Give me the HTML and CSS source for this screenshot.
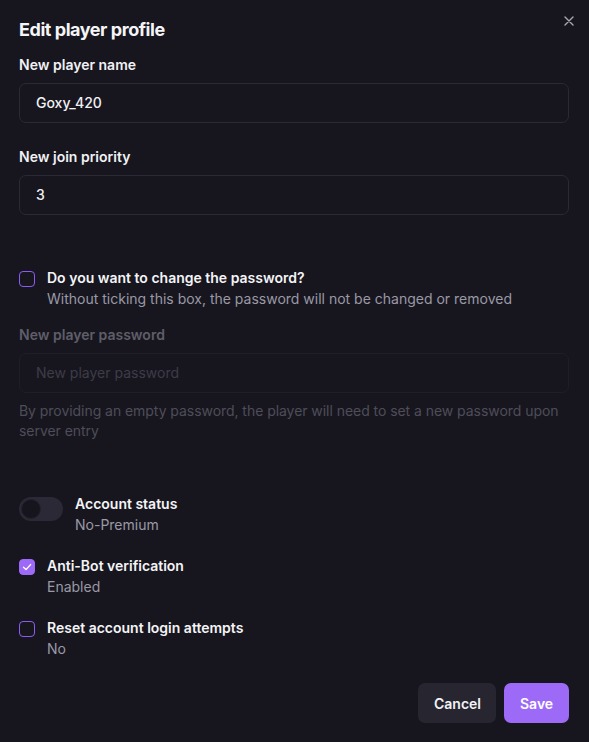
FILE: index.html
```html
<!DOCTYPE html>
<html>
<head>
<meta charset="utf-8">
<link rel="stylesheet" href="styles.css">
</head>
<body>
<div class="modal">
  <button class="close" aria-label="Close">
    <svg width="10" height="10" viewBox="0 0 10 10"><path d="M1 1L9 9M9 1L1 9" stroke="#a9a8b3" stroke-width="1.4" stroke-linecap="round"/></svg>
  </button>
  <h1 class="title">Edit player profile</h1>

  <div class="field first">
    <label class="label">New player name</label>
    <div class="input">Goxy_420</div>
  </div>

  <div class="field">
    <label class="label">New join priority</label>
    <div class="input">3</div>
  </div>

  <div class="check-row big-gap">
    <span class="box"></span>
    <div class="text">
      <div class="t-main">Do you want to change the password?</div>
      <div class="t-sub">Without ticking this box, the password will not be changed or removed</div>
    </div>
  </div>

  <div class="field pw">
    <label class="label dim">New player password</label>
    <div class="input disabled">New player password</div>
    <p class="help">By providing an empty password, the player will need to set a new password upon server entry</p>
  </div>

  <div class="check-row big-gap">
    <span class="toggle"><span class="thumb"></span></span>
    <div class="text">
      <div class="t-main">Account status</div>
      <div class="t-sub">No-Premium</div>
    </div>
  </div>

  <div class="check-row small-gap">
    <span class="box checked">
      <svg width="12" height="12" viewBox="0 0 12 12"><path d="M2.5 6.3L5 8.6L9.6 3.6" fill="none" stroke="#fff" stroke-width="1.4" stroke-linecap="round" stroke-linejoin="round"/></svg>
    </span>
    <div class="text">
      <div class="t-main">Anti-Bot verification</div>
      <div class="t-sub">Enabled</div>
    </div>
  </div>

  <div class="check-row small-gap">
    <span class="box"></span>
    <div class="text">
      <div class="t-main">Reset account login attempts</div>
      <div class="t-sub">No</div>
    </div>
  </div>

  <div class="actions">
    <button class="btn cancel">Cancel</button>
    <button class="btn save">Save</button>
  </div>
</div>
</body>
</html>
```

FILE: styles.css
```css
* { box-sizing: border-box; }
html, body {
  margin: 0;
  padding: 0;
  background: #17161f;
}
body {
  font-family: Inter, "Noto Sans", sans-serif;
  color: #f4f4f6;
  font-size: 14px;
  line-height: 20px;
}
.modal {
  position: relative;
  width: 589px;
  height: 742px;
  padding: 16px 20px 19px 19px;
  display: flex;
  flex-direction: column;
}
.close {
  position: absolute;
  top: 16px;
  right: 15px;
  width: 10px;
  height: 10px;
  padding: 0;
  border: 0;
  background: none;
  display: flex;
}
.title {
  margin: 0;
  font-size: 18px;
  line-height: 28px;
  font-weight: 700;
  letter-spacing: -0.45px;
  color: #f5f5f7;
}
.field { display: flex; flex-direction: column; margin-top: 24px; }
.field.first { margin-top: 11px; }
.field.pw { margin-top: 16px; }
.label {
  font-weight: 600;
  font-size: 14px;
  line-height: 20px;
  color: #f1f1f4;
  margin-bottom: 8px;
}
.label.dim { color: #5f5e69; }
.input {
  height: 40px;
  border: 1px solid #2a2934;
  border-radius: 7px;
  padding: 0 16px;
  display: flex;
  align-items: center;
  font-weight: 500;
  color: #f1f1f4;
}
.input.disabled {
  border-color: #1f1e28;
  color: #3d3c47;
  font-weight: 400;
}
.help {
  margin: 8px 0 0;
  color: #4e4d58;
  letter-spacing: -0.05px;
}
.check-row {
  display: flex;
  align-items: flex-start;
  gap: 12px;
}
.big-gap { margin-top: 53px; }
.small-gap { margin-top: 21px; }
.box {
  width: 16px;
  height: 16px;
  margin-top: 3px;
  border: 1.5px solid #8c5cf2;
  border-radius: 4px;
  flex: none;
  display: flex;
  align-items: center;
  justify-content: center;
}
.box.checked {
  background: #9d6af8;
  border-color: #9d6af8;
}
.toggle {
  width: 44px;
  height: 24px;
  margin-top: 3px;
  border-radius: 12px;
  background: #2a2935;
  padding: 2px;
  flex: none;
  display: flex;
}
.thumb {
  width: 20px;
  height: 20px;
  border-radius: 50%;
  background: #16151d;
  border: 1px solid #23222c;
}
.text { display: flex; flex-direction: column; }
.t-main { font-weight: 600; color: #f4f4f6; }
.t-sub { color: #9a99a5; margin-top: 1px; }
.actions {
  margin-top: 24px;
  display: flex;
  justify-content: flex-end;
  gap: 8px;
}
.btn {
  height: 40px;
  border: 0;
  border-radius: 7px;
  font-family: Inter, "Noto Sans", sans-serif;
  font-size: 14px;
  font-weight: 600;
  padding: 0 16px;
  color: #f3f3f5;
}
.cancel { background: #272630; width: 78px; }
.save { background: #9d6af8; color: #fff; width: 65px; }
```
